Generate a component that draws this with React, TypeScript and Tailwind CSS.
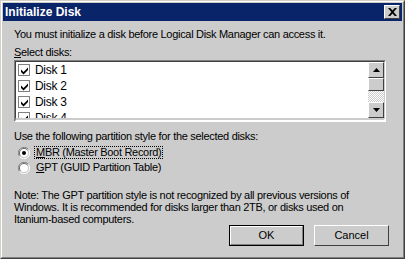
import React from 'react';

function Check() {
  return (
    <span className="w-[12px] h-[12px] border border-[#808080] bg-white flex items-center justify-center shrink-0">
      <svg width="9" height="9" viewBox="0 0 9 9">
        <path d="M1 3.5 L3.5 6 L8 1.5 L8 4 L3.5 8.5 L1 6 Z" fill="#000" />
      </svg>
    </span>
  );
}

function Radio({ on }: { on?: boolean }) {
  return (
    <span className="relative w-[12px] h-[12px] shrink-0">
      <svg width="12" height="12" viewBox="0 0 12 12">
        <path d="M10.5 2.5 A5.5 5.5 0 0 0 1.5 9.5" stroke="#808080" fill="none" />
        <path d="M9.5 3.5 A4 4 0 0 0 2.5 8.5" stroke="#404040" fill="none" />
        <circle cx="6" cy="6" r="4" fill="#fff" />
        <path d="M1.5 9.5 A5.5 5.5 0 0 0 10.5 2.5" stroke="#fff" fill="none" />
        {on && <circle cx="6" cy="6" r="2" fill="#000" />}
      </svg>
    </span>
  );
}

function Arrow({ up }: { up?: boolean }) {
  return (
    <svg width="7" height="4" viewBox="0 0 7 4">
      <path d={up ? 'M3.5 0 L7 4 L0 4 Z' : 'M0 0 L7 0 L3.5 4 Z'} fill="#000" />
    </svg>
  );
}

const raised =
  'border border-t-white border-l-white border-r-[#404040] border-b-[#404040] bg-[#cccccc]';

export default function App() {
  const disks = ['Disk 1', 'Disk 2', 'Disk 3', 'Disk 4'];
  return (
    <div
      className="w-[405px] h-[259px] border border-t-[#d4d0c8] border-l-[#d4d0c8] border-r-[#404040] border-b-[#404040] text-black"
      style={{ fontFamily: '"Liberation Sans", Arial, sans-serif' }}
    >
      <div className="h-full border border-t-white border-l-white border-r-[#808080] border-b-[#808080] bg-[#cccccc] p-px flex flex-col">
        {/* title bar */}
        <div className="h-[18px] bg-[#0a246a] flex items-center justify-between pl-[2px] pr-[2px]">
          <span className="text-white font-bold text-[12px] leading-none">Initialize Disk</span>
          <button className={`w-[16px] h-[14px] ${raised} flex items-center justify-center`}>
            <svg width="9" height="8" viewBox="0 0 9 8">
              <path d="M0 0 L2.2 0 L4.5 2.6 L6.8 0 L9 0 L5.6 4 L9 8 L6.8 8 L4.5 5.4 L2.2 8 L0 8 L3.4 4 Z" fill="#000" />
            </svg>
          </button>
        </div>

        <div className="flex flex-col pl-[11px] text-[11px] tracking-[-0.3px]">
          <p className="mt-[7px] h-[12px] leading-[12px]">
            You must initialize a disk before Logical Disk Manager can access it.
          </p>
          <p className="mt-[6px] h-[12px] leading-[12px]">
            <span className="underline">S</span>elect disks:
          </p>

          {/* list box */}
          <div className="mt-[2px] w-[372px] h-[62px] border-2 border-t-[#808080] border-l-[#808080] border-r-white border-b-white">
            <div className="h-full flex border border-t-[#404040] border-l-[#404040] border-r-[#cccccc] border-b-[#cccccc] -m-px">
              <div className="flex-1 bg-white overflow-hidden">
                {disks.map((d) => (
                  <div key={d} className="h-[16px] flex items-center gap-[5px] pl-[2px]">
                    <Check />
                    <span className="leading-none text-[12px]">{d}</span>
                  </div>
                ))}
              </div>
              <div className="w-[16px] flex flex-col">
                <div className={`h-[16px] ${raised} flex items-center justify-center`}>
                  <Arrow up />
                </div>
                <div className={`h-[13px] ${raised}`} />
                <div className="flex-1 bg-[repeating-conic-gradient(#ffffff_0_25%,#cccccc_0_50%)] bg-[length:2px_2px]" />
                <div className={`h-[16px] ${raised} flex items-center justify-center`}>
                  <Arrow />
                </div>
              </div>
            </div>
          </div>

          <p className="mt-[8px] h-[12px] leading-[12px]">
            Use the following partition style for the selected disks:
          </p>
          <div className="mt-[3px] h-[15px] flex items-center gap-[4px] pl-[4px]">
            <Radio on />
            <span className="border border-dotted border-black px-px leading-[11px]">
              <span className="underline">M</span>BR (Master Boot Record)
            </span>
          </div>
          <div className="h-[15px] flex items-center gap-[4px] pl-[4px]">
            <Radio />
            <span className="border border-transparent px-px leading-[11px]">
              <span className="underline">G</span>PT (GUID Partition Table)
            </span>
          </div>

          <p className="mt-[14px] leading-[12px]">
            Note: The GPT partition style is not recognized by all previous versions of
            <br />
            Windows. It is recommended for disks larger than 2TB, or disks used on
            <br />
            Itanium-based computers.
          </p>

          <div className="flex justify-end gap-[10px] pr-[13px] tracking-normal">
            <button className="w-[75px] h-[21px] border border-black">
              <span className={`h-full w-full flex items-center justify-center ${raised} border-r-[#808080] border-b-[#808080]`}>
                OK
              </span>
            </button>
            <button className={`w-[75px] h-[21px] ${raised} flex items-center justify-center`}>
              Cancel
            </button>
          </div>
        </div>
      </div>
    </div>
  );
}
